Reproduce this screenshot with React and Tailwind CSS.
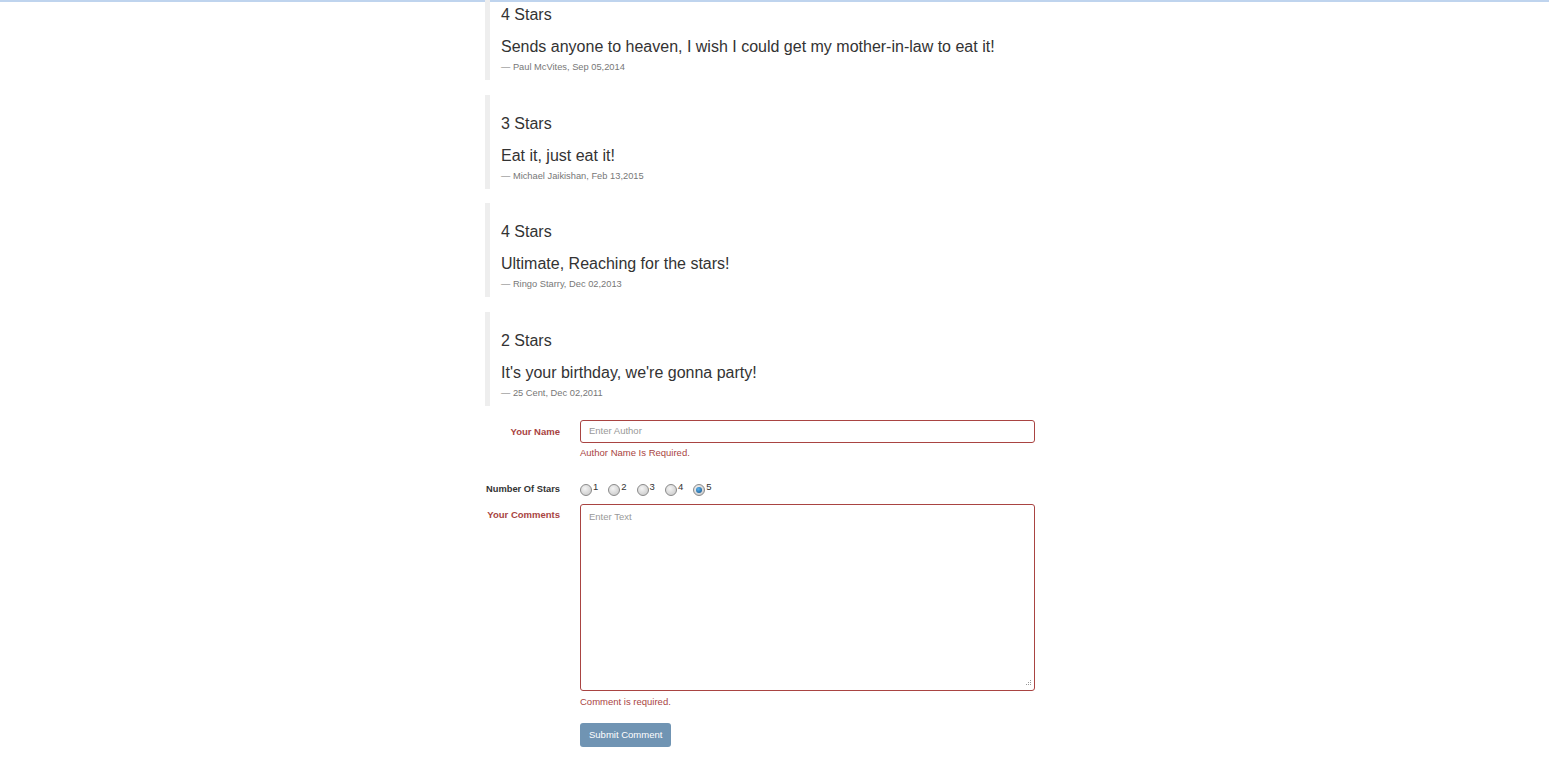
import React from "react";

const reviews = [
  { stars: "4 Stars", text: "Sends anyone to heaven, I wish I could get my mother-in-law to eat it!", by: "Paul McVites, Sep 05,2014" },
  { stars: "3 Stars", text: "Eat it, just eat it!", by: "Michael Jaikishan, Feb 13,2015" },
  { stars: "4 Stars", text: "Ultimate, Reaching for the stars!", by: "Ringo Starry, Dec 02,2013" },
  { stars: "2 Stars", text: "It's your birthday, we're gonna party!", by: "25 Cent, Dec 02,2011" },
];

function Radio({ checked, label }) {
  return (
    <label className="flex items-start mr-[10px]">
      <span
        className="mt-[2px] w-[12px] h-[12px] rounded-full border border-[#8a8a8a] flex items-center justify-center"
        style={{ background: "radial-gradient(circle at 40% 35%, #f4f4f4, #c4c4c4)" }}
      >
        {checked && (
          <span
            className="w-[6px] h-[6px] rounded-full"
            style={{ background: "radial-gradient(circle at 40% 35%, #5fb4ee, #0d4f87)" }}
          />
        )}
      </span>
      <span className="text-[9.5px] leading-[10px] text-[#333] ml-[1px]">{label}</span>
    </label>
  );
}

export default function App() {
  return (
    <div className="min-h-[778px] bg-white overflow-hidden" style={{ fontFamily: '"Liberation Sans", Arial, sans-serif' }}>
      <div className="h-[2px] bg-[#bfd4ee]" />
      <div className="ml-[485px] w-[550px] mt-[-16px] text-[#333]">
        {reviews.map((r, i) => (
          <div key={i} className="border-l-[5px] border-[#eeeeee] pl-[11px] pt-[10px] pb-[5px] mb-[14.5px]">
            <div className="mt-[10px] text-[16px] leading-[18px] mb-[10px]">{r.stars}</div>
            <div className="text-[16px] leading-[25px]">{r.text}</div>
            <div className="text-[9.3px] leading-[16px] text-[#777]">— {r.by}</div>
          </div>
        ))}

        <div className="flex">
          <div className="w-[75px] text-right text-[9.5px] font-bold text-[#a94442] leading-[23px] whitespace-nowrap">Your Name</div>
          <div className="ml-[20px] w-[455px]">
            <div className="h-[23px] border border-[#a94442] rounded-[3px] flex items-center pl-[8px] text-[9.5px] text-[#999]">
              Enter Author
            </div>
            <div className="text-[9.5px] text-[#a94442] mt-[3px] leading-[14px]">Author Name Is Required.</div>
          </div>
        </div>

        <div className="flex mt-[22px]">
          <div className="w-[75px] flex justify-end text-[9.3px] font-bold text-[#333] leading-[14px] whitespace-nowrap">Number Of Stars</div>
          <div className="ml-[20px] flex">
            <Radio label="1" />
            <Radio label="2" />
            <Radio label="3" />
            <Radio label="4" />
            <Radio label="5" checked />
          </div>
        </div>

        <div className="flex mt-[8px]">
          <div className="w-[75px] text-right text-[9.5px] font-bold text-[#a94442] leading-[22px] whitespace-nowrap">Your Comments</div>
          <div className="ml-[20px] w-[455px]">
            <div className="relative h-[187px] border border-[#a94442] rounded-[3px] pl-[8px] pt-[5px] text-[9.5px] text-[#999] leading-[14px]">
              Enter Text
              <svg className="absolute right-[2px] bottom-[2px]" width="9" height="9" viewBox="0 0 9 9">
                <rect x="7" y="1" width="1" height="1" fill="#999" />
                <rect x="5" y="3" width="1" height="1" fill="#999" />
                <rect x="7" y="3" width="1" height="1" fill="#999" />
                <rect x="3" y="5" width="1" height="1" fill="#999" />
                <rect x="5" y="5" width="1" height="1" fill="#999" />
                <rect x="7" y="5" width="1" height="1" fill="#999" />
              </svg>
            </div>
            <div className="text-[9.5px] text-[#a94442] mt-[4px] leading-[14px]">Comment is required.</div>
            <button className="mt-[14px] h-[24px] px-[9px] rounded-[3px] bg-[#7094b3] text-white text-[9.5px]">
              Submit Comment
            </button>
          </div>
        </div>
      </div>
    </div>
  );
}
